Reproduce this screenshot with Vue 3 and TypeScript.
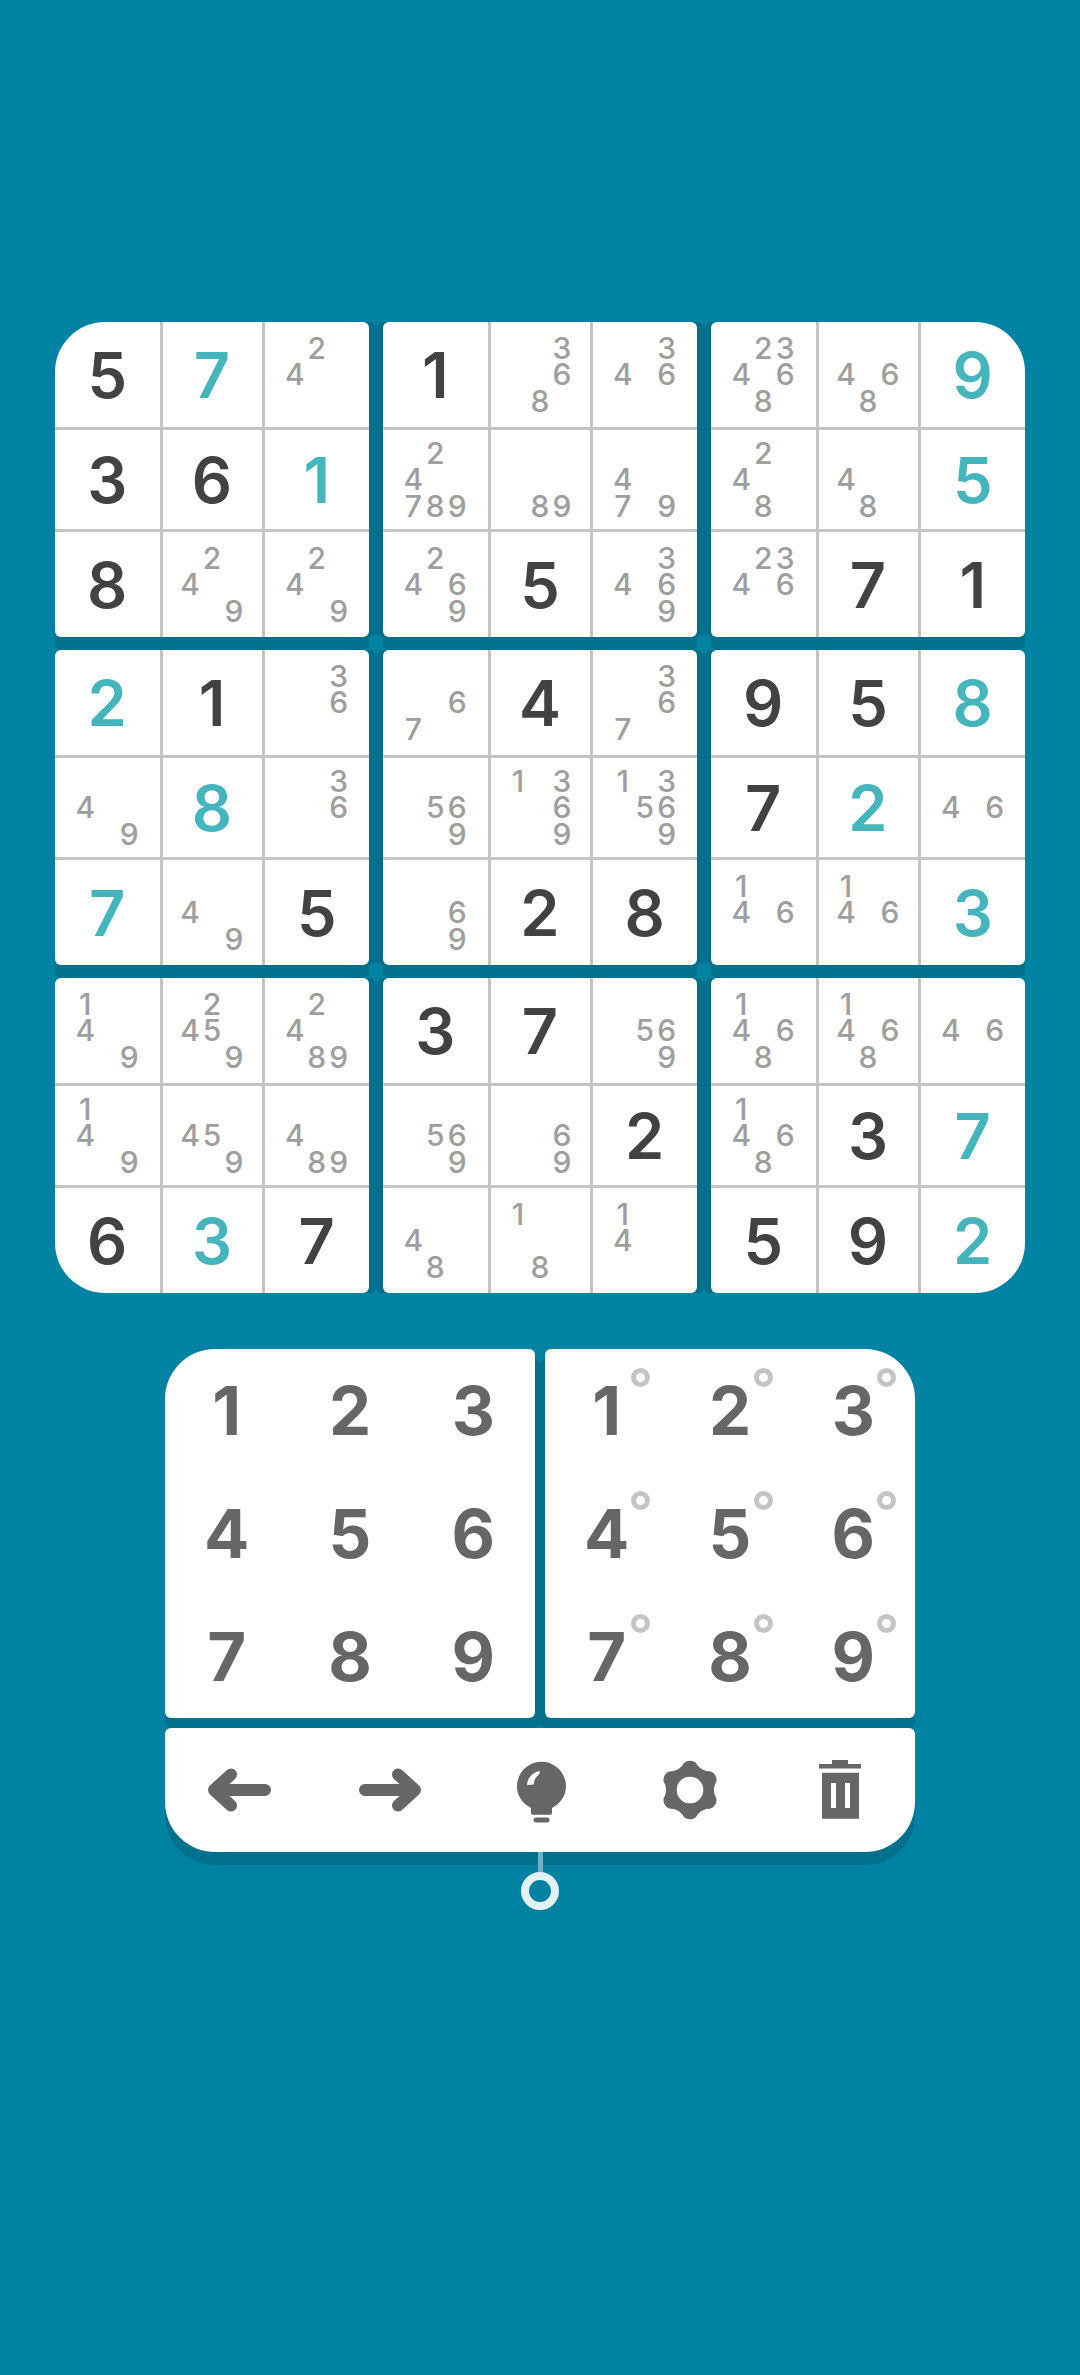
<script setup lang="ts">
type Cell = string;
const blocks: Cell[][] = [
  ['g5', 't7', 'n24', 'g3', 'g6', 't1', 'g8', 'n249', 'n249'],
  ['g1', 'n368', 'n346', 'n24789', 'n89', 'n479', 'n2469', 'g5', 'n3469'],
  ['n23468', 'n468', 't9', 'n248', 'n48', 't5', 'n2346', 'g7', 'g1'],
  ['t2', 'g1', 'n36', 'n49', 't8', 'n36', 't7', 'n49', 'g5'],
  ['n67', 'g4', 'n367', 'n569', 'n1369', 'n13569', 'n69', 'g2', 'g8'],
  ['g9', 'g5', 't8', 'g7', 't2', 'n46', 'n146', 'n146', 't3'],
  ['n149', 'n2459', 'n2489', 'n149', 'n459', 'n489', 'g6', 't3', 'g7'],
  ['g3', 'g7', 'n569', 'n569', 'n69', 'g2', 'n48', 'n18', 'n14'],
  ['n1468', 'n1468', 'n46', 'n1468', 'g3', 't7', 'g5', 'g9', 't2'],
];
const digits = ['1', '2', '3', '4', '5', '6', '7', '8', '9'];

function gearPath(): string {
  const cx = 30;
  const cy = 30;
  const pts: string[] = [];
  for (let i = 0; i < 240; i++) {
    const a = (i / 240) * Math.PI * 2;
    const f = Math.cos(6 * a);
    const r = 26.6 + 2.6 * Math.sign(f) * Math.pow(Math.abs(f), 0.7);
    const x = cx + r * Math.sin(a);
    const y = cy - r * Math.cos(a);
    pts.push(`${i === 0 ? 'M' : 'L'}${x.toFixed(2)} ${y.toFixed(2)}`);
  }
  return pts.join(' ') + ' Z M43.3 30 A13.3 13.3 0 1 0 16.7 30 A13.3 13.3 0 1 0 43.3 30 Z';
}
const gear = gearPath();
</script>

<template>
  <main class="page">
    <section class="board">
      <div v-for="(block, b) in blocks" :key="b" class="block" :class="'block-' + b">
        <div v-for="(cell, c) in block" :key="c" class="cell">
          <div v-if="cell[0] === 'n'" class="notes">
            <span v-for="d in digits" :key="d">{{ cell.includes(d) ? d : '' }}</span>
          </div>
          <span v-else class="big" :class="{ teal: cell[0] === 't' }">{{ cell[1] }}</span>
        </div>
      </div>
    </section>

    <section class="pad">
      <div class="keys">
        <div class="panel panel-left">
          <span v-for="d in digits" :key="d" class="key">{{ d }}</span>
        </div>
        <div class="panel panel-right">
          <span v-for="d in digits" :key="d" class="key"><span class="key-text">{{ d }}<i class="ring"></i></span></span>
        </div>
      </div>
      <div class="tools">
        <div class="tool">
          <svg width="70" height="50" viewBox="0 0 70 50"><path d="M60 25H9M26 9.500L9 25L26 40.500" fill="none" stroke="#666" stroke-width="12" stroke-linecap="round" stroke-linejoin="round" /></svg>
        </div>
        <div class="tool">
          <svg width="70" height="50" viewBox="0 0 70 50"><path d="M10 25H60M43 9.500L60 25L43 40.500" fill="none" stroke="#666" stroke-width="12" stroke-linecap="round" stroke-linejoin="round" /></svg>
        </div>
        <div class="tool">
          <svg width="60" height="70" viewBox="0 0 60 70">
            <path d="M31.500 6.800C18 6.800 7 17.800 7 31.300C7 40.500 12.200 48.500 21 53V58C21 59 21.800 59.800 22.800 59.800H40.200C41.200 59.800 42 59 42 58V53C50.800 48.500 56 40.500 56 31.300C56 17.800 45 6.800 31.500 6.800Z" fill="#666" />
            <rect x="23.500" y="62.500" width="16" height="5" rx="2.500" fill="#666" />
            <path d="M17 30C17.500 23 22.500 17 30 16C29.500 19 28.500 20.500 27 21.200C25 23 24 26 23.800 29.600Z" fill="#fff" />
          </svg>
        </div>
        <div class="tool">
          <svg width="60" height="60" viewBox="0 0 60 60"><path :d="gear" fill="#666" fill-rule="evenodd" /></svg>
        </div>
        <div class="tool">
          <svg width="60" height="70" viewBox="0 0 60 70">
            <path d="M22 5H38V9H51V13.500H9V9H22Z" fill="#666" />
            <path d="M12 17.700H49V63.700H12ZM21 28V53H26V28ZM35 28V53H40V28Z" fill="#666" fill-rule="evenodd" />
          </svg>
        </div>
      </div>
      <div class="pin">
        <i class="pin-line"></i>
        <i class="pin-ring"></i>
      </div>
    </section>
  </main>
</template>

<style scoped>
.page {
  width: 1080px;
  height: 2375px;
  box-sizing: border-box;
  padding-top: 322px;
  background: #0083a3;
  font-family: "Inter", "Roboto", sans-serif;
  overflow: hidden;
}
.board {
  display: grid;
  grid-template-columns: repeat(3, 314px);
  grid-template-rows: repeat(3, 315px);
  column-gap: 14px;
  row-gap: 13px;
  margin-left: 55px;
}
.block {
  display: grid;
  grid-template-columns: 107.5px 102px 104.5px;
  grid-template-rows: 108px 102px 105px;
  background: #fff;
  border-radius: 6px;
  overflow: hidden;
}
.block-0, .block-3 { box-shadow: 0 13px 0 #00718d, 7px 0 0 #00718d; }
.block-1, .block-4 { box-shadow: 0 13px 0 #00718d, 7px 0 0 #00718d, -7px 0 0 #00718d; }
.block-2, .block-5 { box-shadow: 0 13px 0 #00718d, -7px 0 0 #00718d; }
.block-6 { box-shadow: 7px 0 0 #00718d; }
.block-7 { box-shadow: 7px 0 0 #00718d, -7px 0 0 #00718d; }
.block-8 { box-shadow: -7px 0 0 #00718d; }
.block-0 { border-top-left-radius: 50px; }
.block-2 { border-top-right-radius: 50px; }
.block-6 { border-bottom-left-radius: 50px; }
.block-8 { border-bottom-right-radius: 50px; }
.cell {
  display: flex;
  align-items: center;
  justify-content: center;
  box-sizing: border-box;
  border-right: 3px solid #c4c4c4;
  border-bottom: 3px solid #c4c4c4;
  min-width: 0;
  min-height: 0;
}
.cell:nth-child(3n) { border-right: 0; }
.cell:nth-child(n + 7) { border-bottom: 0; }
.big {
  font-size: 63px;
  font-weight: 600;
  line-height: 1;
  padding-top: 2px;
  color: #424242;
}
.big.teal { color: #45b5bd; }
.notes {
  display: grid;
  grid-template-columns: repeat(3, 22px);
  grid-template-rows: repeat(3, 26.500px);
  place-items: center;
  font-size: 30px;
  font-weight: 500;
  line-height: 26.500px;
  color: #9e9e9e;
}
.pad {
  width: 750px;
  margin: 56px 0 0 165px;
  position: relative;
}
.keys {
  display: flex;
  gap: 10px;
}
.panel {
  width: 370px;
  height: 369px;
  display: grid;
  grid-template-columns: repeat(3, 1fr);
  grid-template-rows: repeat(3, 1fr);
  background: #fff;
  border-radius: 6px;
}
.panel-left {
  border-top-left-radius: 50px;
  box-shadow: 0 10px 0 #00718d, 5px 10px 0 #00718d;
}
.panel-right {
  border-top-right-radius: 50px;
  box-shadow: 0 10px 0 #00718d, -5px 10px 0 #00718d;
}
.key {
  display: flex;
  align-items: center;
  justify-content: center;
  font-size: 67px;
  font-weight: 700;
  line-height: 1;
  color: #666;
}
.key-text { position: relative; }
.ring {
  position: absolute;
  left: calc(50% + 24px);
  top: -9px;
  width: 19px;
  height: 19px;
  box-sizing: border-box;
  border: 5.500px solid #c4c4c4;
  border-radius: 50%;
}
.tools {
  display: grid;
  grid-template-columns: repeat(5, 1fr);
  height: 124px;
  margin-top: 10px;
  background: #fff;
  border-radius: 6px 6px 50px 50px;
  box-shadow: 0 13px 0 #00718d;
  position: relative;
}
.tool {
  display: flex;
  align-items: center;
  justify-content: center;
}
.pin {
  display: flex;
  flex-direction: column;
  align-items: center;
}
.pin-line {
  width: 5px;
  height: 20px;
  background: #6fb5c8;
  position: relative;
}
.pin-ring {
  width: 38px;
  height: 38px;
  box-sizing: border-box;
  border: 8.500px solid #e3f2f6;
  border-radius: 50%;
}
</style>
